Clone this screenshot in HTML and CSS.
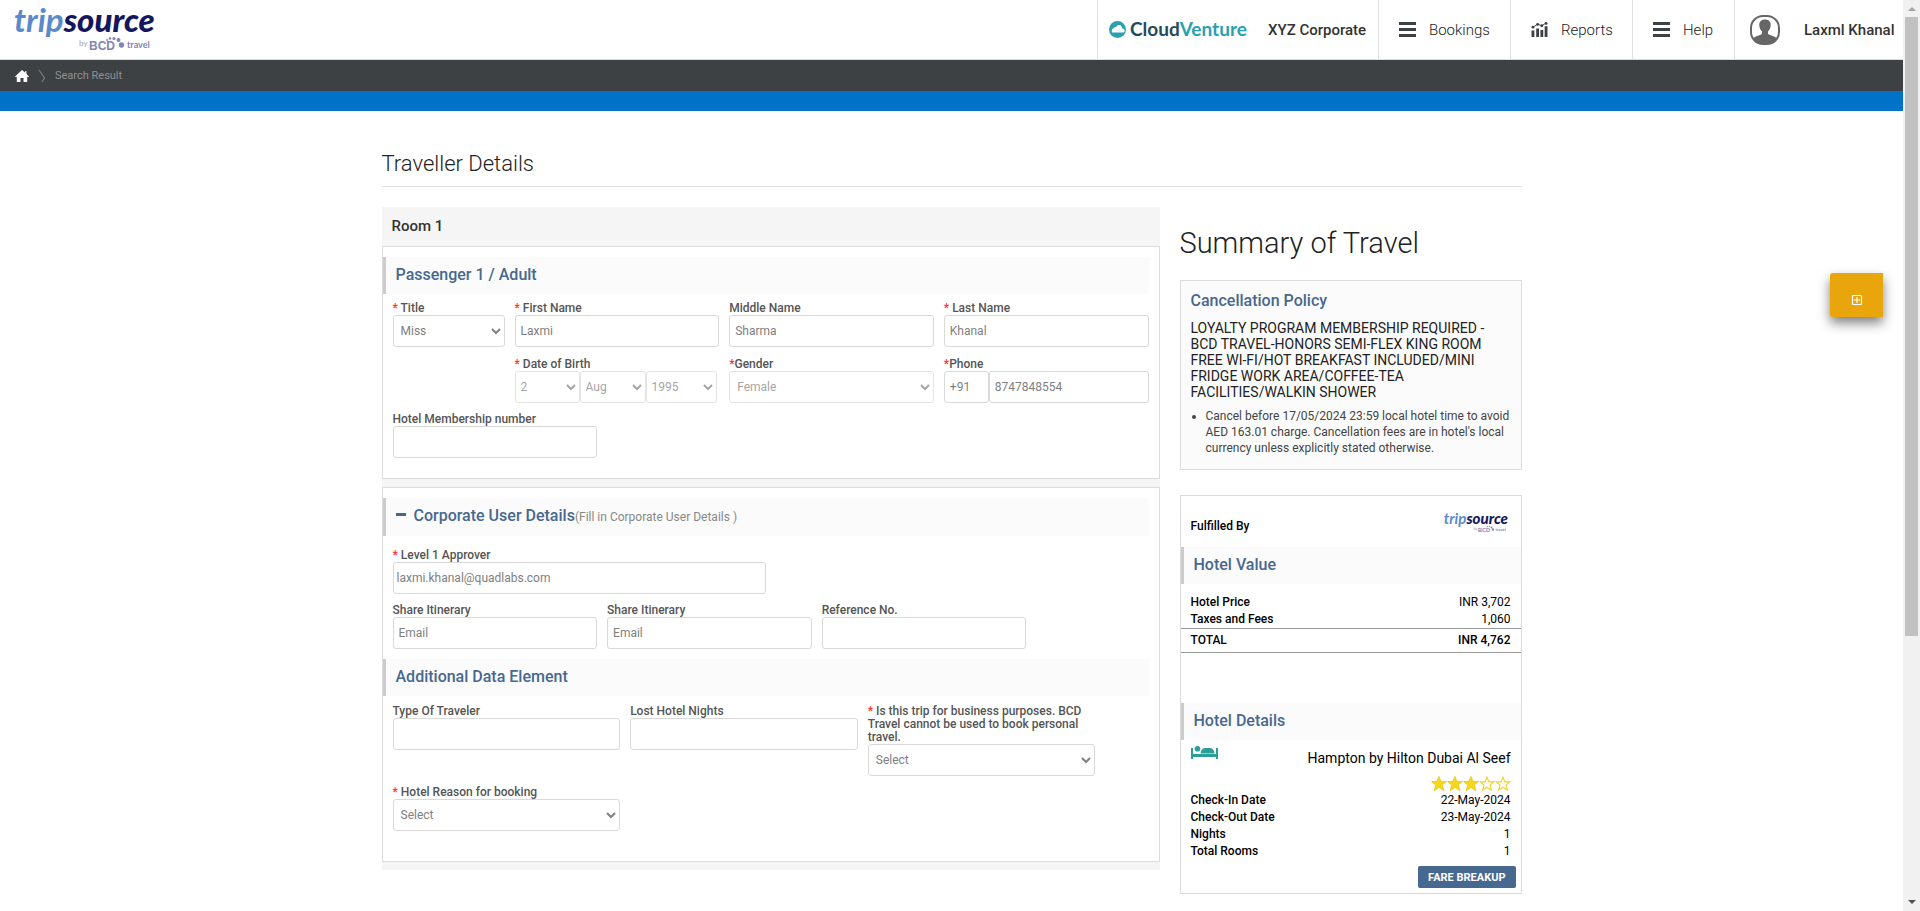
FILE: index.html
```html
<!DOCTYPE html>
<html lang="en">
<head>
<meta charset="utf-8">
<title>Traveller Details</title>
<link rel="stylesheet" href="styles.css">
</head>
<body>
<svg class="defs" aria-hidden="true">
  <symbol id="tripsource" viewBox="0 0 150 59">
    <text x="0" y="32" class="logo-trip">trip<tspan class="logo-source">source</tspan></text>
    <text x="65" y="46" class="logo-by">by</text>
    <text x="75" y="50" class="logo-bcd">BCD</text>
    <text x="113" y="48" class="logo-travel">travel</text>
    <g fill="#8284b4"><circle cx="93" cy="40" r="1"/><circle cx="96" cy="38.500" r="1.300"/><circle cx="100" cy="38.500" r="1.600"/><circle cx="104.500" cy="40" r="2"/><circle cx="107.500" cy="45" r="2.700"/></g>
  </symbol>
  <symbol id="menu" viewBox="0 0 17 15"><path d="M0 0h17v3H0zM0 6h17v3H0zM0 12h17v3H0z" fill="#3d4144"/></symbol>
  <symbol id="star-full" viewBox="0 0 16 16"><path d="M8 .5l2.200 5h5.300l-4.200 3.500 1.600 5.700L8 11.400l-4.900 3.300 1.600-5.700L.5 5.500h5.300z" fill="#f5d71c" stroke="#efc51a" stroke-width=".8"/></symbol>
  <symbol id="star-empty" viewBox="0 0 16 16"><path d="M8 1.200l1.900 4.700h5l-4 3.200 1.500 5L8 11.200l-4.400 2.900 1.500-5-4-3.200h5z" fill="#fff" stroke="#f2d02c" stroke-width="1.100"/></symbol>
</svg>

<header class="topbar">
  <a class="brand" href="#" aria-label="tripsource by BCD travel"><svg class="brand-logo"><use href="#tripsource"/></svg></a>
  <div class="corp">
    <svg class="cloud" viewBox="0 -3 138 26" role="img" aria-label="CloudVenture">
      <circle cx="8.500" cy="9.500" r="8.500" fill="#2aa0b0"/>
      <path d="M3 12.500h11.500q1.500-.6 1-2.600-.6-1.500-2.300-1.400-.3-3-3-3.400-2.400 0-3.200 2-2-.6-2.600 1.400-2.200.3-1.400 4z" fill="#fff"/>
      <text x="21" y="16" class="logo-cloud">Cloud<tspan class="logo-venture">Venture</tspan></text>
    </svg>
    <span class="corp-name">XYZ Corporate</span>
  </div>
  <nav class="nav">
    <a class="nav-item nav-bookings" href="#"><svg class="nav-icon"><use href="#menu"/></svg>Bookings</a>
    <a class="nav-item nav-reports" href="#"><svg class="nav-icon" viewBox="0 0 17 16"><path d="M0 9h3v7H0zM5 7h3v9H5zM9.500 8.500h3V16h-3zM14 4.500h3V16h-3z" fill="#3d4144"/><path d="M1.500 5.500l5-3 4.500 1.500 4.500-3" fill="none" stroke="#3d4144" stroke-width="1"/><g fill="#3d4144"><circle cx="1.500" cy="5.500" r="1.500"/><circle cx="6.500" cy="2.500" r="1.500"/><circle cx="11" cy="4" r="1.500"/><circle cx="15.500" cy="1.500" r="1.500"/></g></svg>Reports</a>
    <a class="nav-item nav-help" href="#"><svg class="nav-icon"><use href="#menu"/></svg>Help</a>
    <a class="nav-item nav-user" href="#"><svg class="avatar" viewBox="0 0 30 30"><clipPath id="av"><rect x="1" y="1" width="28" height="28" rx="12"/></clipPath><rect x="1" y="1" width="28" height="28" rx="12" fill="#fff" stroke="#666" stroke-width="2"/><path clip-path="url(#av)" d="M15 4.500c4 0 6 2.500 5.700 6-.2 3-1.600 4.700-2.700 6v2.200c2 2 7.500 2.300 9.500 5.300V29h-25v-5c2-3 7.500-3.300 9.500-5.300v-2.200c-1.100-1.300-2.500-3-2.700-6-.3-3.500 1.700-6 5.700-6z" fill="#666"/></svg>Laxml Khanal</a>
  </nav>
</header>

<nav class="crumbs" aria-label="Breadcrumb">
  <a class="home" href="#" aria-label="Home"><svg width="14" height="12" viewBox="0 0 14 12"><path d="M7 0l3 2.600V1.200h1.500v2.700L14 6.500l-1 .7-.8-.6V12H8.500V8h-3v4H1.800V6.600l-.8.600-1-.7z" fill="#fff"/></svg></a>
  <svg width="8" height="12" viewBox="0 0 8 12"><path d="M1 0l5.500 8L4 12" fill="none" stroke="#77797b" stroke-width="1.300"/></svg>
  <span>Search Result</span>
</nav>
<div class="band"></div>

<main class="container">
  <h1 class="page-title">Traveller Details</h1>
  <div class="columns">
    <form class="room">
      <h2 class="room-title">Room 1</h2>
      <section class="panel panel-passenger">
        <h3 class="section">Passenger 1 / Adult</h3>
        <div class="fields fields-person">
          <div class="field"><label for="title"><i>*</i> Title</label><select id="title" class="wide-pad"><option>Miss</option></select></div>
          <div class="field"><label for="first"><i>*</i> First Name</label><input id="first" value="Laxmi"></div>
          <div class="field"><label for="middle">Middle Name</label><input id="middle" value="Sharma"></div>
          <div class="field"><label for="last"><i>*</i> Last Name</label><input id="last" value="Khanal"></div>
          <div class="field field-dob"><label for="day"><i>*</i> Date of Birth</label>
            <div class="joined dob"><select id="day" disabled><option>2</option></select><select aria-label="Month" disabled><option>Aug</option></select><select aria-label="Year" disabled><option>1995</option></select></div></div>
          <div class="field"><label for="gender"><i>*</i>Gender</label><select id="gender" class="wide-pad" disabled><option>Female</option></select></div>
          <div class="field"><label for="phone"><i>*</i>Phone</label>
            <div class="joined phone"><input aria-label="Country code" value="+91"><input id="phone" value="8747848554"></div></div>
        </div>
        <div class="fields fields-four">
          <div class="field"><label for="member">Hotel Membership number</label><input id="member"></div>
        </div>
      </section>
      <section class="panel panel-corporate">
        <h3 class="section"><span class="minus"></span>Corporate User Details<small>(Fill in Corporate User Details )</small></h3>
        <div class="fields fields-approver">
          <div class="field"><label for="approver"><i>*</i> Level 1 Approver</label><input id="approver" class="wide-pad" value="laxmi.khanal@quadlabs.com"></div>
        </div>
        <div class="fields fields-four">
          <div class="field"><label for="share1">Share Itinerary</label><input id="share1" placeholder="Email"></div>
          <div class="field"><label for="share2">Share Itinerary</label><input id="share2" placeholder="Email"></div>
          <div class="field"><label for="ref">Reference No.</label><input id="ref"></div>
        </div>
        <h3 class="section">Additional Data Element</h3>
        <div class="fields fields-extra">
          <div class="field"><label for="type">Type Of Traveler</label><input id="type"></div>
          <div class="field"><label for="lost">Lost Hotel Nights</label><input id="lost"></div>
          <div class="field"><label for="business"><i>*</i> Is this trip for business purposes. BCD Travel cannot be used to book personal travel.</label><select id="business" class="wide-pad"><option>Select</option></select></div>
          <div class="field field-reason"><label for="reason"><i>*</i> Hotel Reason for booking</label><select id="reason" class="wide-pad"><option>Select</option></select></div>
        </div>
      </section>
    </form>

    <aside class="summary">
      <h2 class="summary-title">Summary of Travel</h2>
      <section class="policy">
        <h3>Cancellation Policy</h3>
        <p>LOYALTY PROGRAM MEMBERSHIP REQUIRED -<br>BCD TRAVEL-HONORS SEMI-FLEX KING ROOM<br>FREE WI-FI/HOT BREAKFAST INCLUDED/MINI<br>FRIDGE WORK AREA/COFFEE-TEA<br>FACILITIES/WALKIN SHOWER</p>
        <ul><li>Cancel before 17/05/2024 23:59 local hotel time to avoid<br>AED 163.01 charge. Cancellation fees are in hotel's local<br>currency unless explicitly stated otherwise.</li></ul>
      </section>
      <section class="booking">
        <div class="fulfilled"><span>Fulfilled By</span><svg class="small-logo" role="img" aria-label="tripsource by BCD travel"><use href="#tripsource"/></svg></div>
        <h3 class="section">Hotel Value</h3>
        <table class="facts prices">
          <tbody><tr><th>Hotel Price</th><td>INR 3,702</td></tr>
          <tr><th>Taxes and Fees</th><td>1,060</td></tr></tbody>
          <tfoot><tr><th>TOTAL</th><td>INR 4,762</td></tr></tfoot>
        </table>
        <h3 class="section">Hotel Details</h3>
        <div class="hotel">
          <svg class="bed" viewBox="0 0 27 13"><path d="M0 2h2v6h23V2h2v11h-2v-2H2v2H0z" fill="#2a9f98"/><circle cx="6.500" cy="2.800" r="2.800" fill="#2a9f98"/><path d="M9.500 7.500q.5-5.500 5-5.500h4q4.500 0 5 5.500z" fill="#2a9f98"/></svg>
          <span>Hampton by Hilton Dubai Al Seef</span>
        </div>
        <div class="stars" role="img" aria-label="3 of 5 stars"><svg><use href="#star-full"/></svg><svg><use href="#star-full"/></svg><svg><use href="#star-full"/></svg><svg><use href="#star-empty"/></svg><svg><use href="#star-empty"/></svg></div>
        <table class="facts">
          <tbody><tr><th>Check-In Date</th><td>22-May-2024</td></tr>
          <tr><th>Check-Out Date</th><td>23-May-2024</td></tr>
          <tr><th>Nights</th><td>1</td></tr>
          <tr><th>Total Rooms</th><td>1</td></tr></tbody>
        </table>
        <button class="fare" type="button">FARE BREAKUP</button>
      </section>
    </aside>
  </div>
</main>

<button class="float" type="button" aria-label="Expand"><svg width="10" height="10" viewBox="0 0 10 10"><path d="M1.500.5h7q1 0 1 1v7q0 1-1 1h-7q-1 0-1-1v-7q0-1 1-1zM5 2v6M2 5h6" fill="none" stroke="#fff" stroke-width="1.200"/></svg></button>
<div class="scroll" aria-hidden="true"><span class="arrow arrow-up"></span><span class="thumb"></span><span class="arrow arrow-down"></span></div>
</body>
</html>
```
FILE: styles.css
```css
* { box-sizing: border-box; }
body {
  margin: 0;
  padding-right: 17px;
  background: #fff;
  color: #333;
  font: 12px/16px Roboto, "Liberation Sans", sans-serif;
}
h1, h2, h3, p, ul { margin: 0; padding: 0; font-weight: 400; }
a { color: inherit; text-decoration: none; }
i { color: #f33; font-style: normal; }
svg, symbol { overflow: visible; }
.defs { position: absolute; width: 0; height: 0; }

/* logos */
.logo-trip { font: italic 700 33px Lato, sans-serif; fill: #5a8acb; }
.logo-source { font-weight: 900; fill: #14175e; }
.logo-by { font: 8px Lato, sans-serif; fill: #9a9bbd; }
.logo-bcd { font: 700 12px "Liberation Sans", sans-serif; fill: #8284b4; }
.logo-travel { font: 700 9px Lato, sans-serif; fill: #8284b4; }
.logo-cloud { font: 700 19px Lato, sans-serif; fill: #1f4c5c; }
.logo-venture { fill: #2aa0b0; }

/* header */
.topbar { display: flex; height: 60px; border-bottom: 1px solid #dcdce0; }
.brand { flex: 1; padding: 0 14px; }
.brand-logo { display: block; width: 150px; height: 59px; }
.corp { display: flex; align-items: center; gap: 21px; width: 281px; padding: 0 11px; border-left: 1px solid #e2e2e2; }
.cloud { width: 138px; height: 26px; }
.corp-name { font-size: 15px; font-weight: 500; }
.nav { display: flex; }
.nav-item { display: flex; align-items: center; gap: 13px; padding-left: 20px; border-left: 1px solid #dfdfe4; color: #222; font-size: 15px; font-weight: 300; }
.nav-icon { width: 17px; height: 15px; }
.nav-bookings { width: 132px; }
.nav-reports { width: 122px; }
.nav-help { width: 102px; }
.nav-user { width: 169px; gap: 24px; padding-left: 15px; color: #333; font-weight: 500; }
.avatar { width: 30px; height: 30px; }

.crumbs { display: flex; align-items: center; gap: 9px; height: 31px; padding: 0 15px; background: #3d4144; color: #8e9092; font-size: 11px; }
.home { display: flex; }
.band { height: 20px; background: #0073c9; }

/* page */
.container { width: 1140px; max-width: 100%; margin: 0 auto; }
.page-title { padding: 41px 0 11px; border-bottom: 1px solid #ddd; color: #222; font-size: 22px; font-weight: 300; line-height: 23px; }
.columns { display: flex; align-items: flex-start; gap: 20px; padding-top: 20px; }
.room { flex: 1; padding-bottom: 8px; background: #f5f5f5; }
.room-title { padding: 9px 10px; font-size: 15px; font-weight: 500; line-height: 21px; }
.panel { padding: 10px 0; border: 1px solid #dcdcdc; background: #fff; }
.panel-passenger { padding-bottom: 20px; }
.panel-corporate { margin-top: 8px; padding-bottom: 30px; }
.section { margin-right: 10px; padding: 8px 10px 9px; border-left: 3px solid #ccc; background: #fbfbfb; color: #47688f; font-size: 16px; font-weight: 500; line-height: 20px; }
.section small { color: #888; font-size: 12px; font-weight: 400; }
.minus { display: inline-block; width: 10px; height: 3px; margin-right: 8px; background: #47688f; vertical-align: 5px; }

/* form */
.fields { display: grid; gap: 10px; padding: 8px 10px 0; }
.fields-person { grid-template-columns: 112px 1fr 1fr 1fr; row-gap: 11px; }
.fields-four { grid-template-columns: 204fr 204fr 204fr 112fr; }
.fields-approver { grid-template-columns: 373fr 372fr; padding-top: 13px; }
.fields-extra { grid-template-columns: 227fr 227fr 227fr 43fr; padding-top: 9px; }
.field-dob { grid-column: 2; }
.field-reason { grid-column: 1; }
.field { min-width: 0; }
.field label { display: block; color: #555; font-weight: 500; line-height: 13px; }
.fields + .fields { padding-top: 10px; }
.fields + .section { margin-top: 10px; }
input, select { display: block; width: 100%; height: 32px; padding: 0 5px; border: 1px solid #d9d9d9; border-radius: 3px; background: #fff; color: #808080; font: 12px Roboto, "Liberation Sans", sans-serif; }
select { padding: 0 1px; }
.wide-pad { padding: 0 3px; }
select:disabled { opacity: .7; }
::placeholder { color: #808080; }
.joined { display: grid; }
.dob { grid-template-columns: 65px 66px 71px; }
.phone { grid-template-columns: 45px 1fr; }

/* summary */
.summary { width: 342px; padding-top: 16px; }
.summary-title { color: #222; font-size: 29px; font-weight: 300; line-height: 40px; }
.policy { margin-top: 17px; padding: 11px 10px; border: 1px solid #dcdcdc; background: #fbfbfb; }
.policy h3 { color: #47688f; font-size: 16px; font-weight: 500; line-height: 18px; }
.policy p { padding: 10px 0 6px; color: #222; font-size: 14px; line-height: 16px; white-space: nowrap; }
.policy ul { padding: 2px 0 2px 15px; color: #444; white-space: nowrap; }
.booking { display: flex; flex-direction: column; margin-top: 25px; padding-bottom: 5px; border: 1px solid #dcdcdc; color: #000; }
.booking .section { margin-right: 0; }
.fulfilled { display: flex; justify-content: space-between; padding: 13px 8px 11px 10px; font-weight: 500; line-height: 20px; }
.fulfilled span { padding-top: 7px; }
.small-logo { width: 70px; height: 27px; }
.facts { width: 100%; border-collapse: collapse; }
.facts th, .facts td { padding: 0 10px; line-height: 17px; }
.facts th { font-weight: 500; text-align: left; }
.facts td { text-align: right; }
.prices { margin: 10px 0 50px; }
.prices tfoot th, .prices tfoot td { padding: 3px 10px; border: solid #999; border-width: 1px 0; font-weight: 500; }
.hotel { display: flex; justify-content: space-between; padding: 6px 10px 0; font-size: 14px; line-height: 24px; }
.bed { width: 27px; height: 13px; }
.stars { display: flex; justify-content: flex-end; padding: 6px 10px 0; }
.stars svg { width: 16px; height: 16px; }
.fare { align-self: flex-end; height: 22px; margin: 6px 5px 0; padding: 0 10px; border: 0; border-radius: 2px; background: #47688f; color: #fff; font: 700 11px Roboto, "Liberation Sans", sans-serif; }

/* overlays */
.float { position: fixed; top: 273px; right: 37px; display: flex; align-items: center; justify-content: center; width: 53px; height: 44px; padding: 10px 0 0; border: 0; border-radius: 3px 0 0 3px; background: #e9a60c; box-shadow: 0 6px 12px rgba(0, 0, 0, .5); }
.scroll { position: fixed; top: 0; right: 0; bottom: 0; display: flex; flex-direction: column; align-items: center; width: 17px; padding: 7px 0; background: #f1f1f1; }
.thumb { width: 13px; height: 69%; margin: 6px 0 auto; background: #c1c1c1; }
.arrow { border: 4px solid transparent; }
.arrow-up { border-top: 0; border-bottom-color: #a3a3a3; }
.arrow-down { border-bottom: 0; border-top-color: #505050; }
```
